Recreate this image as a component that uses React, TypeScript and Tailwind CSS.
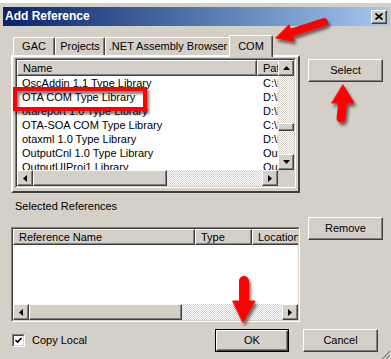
import React from 'react';

const face = 'bg-[#d4d0c8]';
const dither =
  'bg-[image:repeating-conic-gradient(#ffffff_0_25%,#d4d0c8_0_50%)] bg-size-[2px_2px]';
const raised =
  'border border-t-white border-l-white border-r-[#404040] border-b-[#404040] shadow-[inset_-1px_-1px_0_#808080]';

const Tri = ({ dir }: { dir: 'up' | 'down' | 'left' | 'right' }) => {
  const pts = {
    up: '3.5,0 7,4 0,4',
    down: '0,0 7,0 3.5,4',
    left: '4,0 4,7 0,3.5',
    right: '0,0 0,7 4,3.5',
  }[dir];
  const vertical = dir === 'up' || dir === 'down';
  return (
    <svg width={vertical ? 7 : 4} height={vertical ? 4 : 7} viewBox={vertical ? '0 0 7 4' : '0 0 4 7'}>
      <polygon points={pts} fill="#000" />
    </svg>
  );
};

const ArrowBtn = ({ dir }: { dir: 'up' | 'down' | 'left' | 'right' }) => (
  <div className={`w-[16px] h-[16px] shrink-0 flex items-center justify-center ${face} ${raised}`}>
    <Tri dir={dir} />
  </div>
);

const HScroll = ({ thumb }: { thumb: number }) => (
  <div className="flex h-[16px] shrink-0">
    <ArrowBtn dir="left" />
    <div className={`flex-1 ${dither}`}>
      <div className={`h-[16px] ${face} ${raised}`} style={{ width: thumb }} />
    </div>
    <ArrowBtn dir="right" />
  </div>
);

const Sunken = ({ className, children }: { className: string; children: React.ReactNode }) => (
  <div className={`border border-t-[#808080] border-l-[#808080] border-r-white border-b-white ${className}`}>
    <div className="h-full border border-t-[#404040] border-l-[#404040] border-r-[#d4d0c8] border-b-[#d4d0c8] bg-white overflow-hidden">
      {children}
    </div>
  </div>
);

const HeadCell = ({ w, children }: { w: number; children: React.ReactNode }) => (
  <div
    className={`h-[16px] shrink-0 flex items-center pl-[5px] whitespace-nowrap overflow-hidden ${face} ${raised}`}
    style={{ width: w }}
  >
    {children}
  </div>
);

const Button = ({ children, def = false, w = 75 }: { children: React.ReactNode; def?: boolean; w?: number }) => (
  <div className={`h-[23px] shrink-0 ${def ? 'border border-black' : ''}`} style={{ width: w }}>
    <div className={`h-full flex items-center justify-center ${face} ${raised}`}>{children}</div>
  </div>
);

const libs = [
  ['OscAddin 1.1 Type Library', 'C:\\Program Files\\Common Files'],
  ['OTA COM Type Library', 'D:\\Program Files\\HP'],
  ['otareport 1.0 Type Library', 'D:\\Program Files\\HP'],
  ['OTA-SOA COM Type Library', 'C:\\Program Files\\Common Files'],
  ['otaxml 1.0 Type Library', 'D:\\Program Files\\HP'],
  ['OutputCnl 1.0 Type Library', 'OutputCnl.dll'],
  ['OutputUIProj1 Library', 'OutputUIProj1.dll'],
];

const tabs = [
  { label: 'GAC', w: 42 },
  { label: 'Projects', w: 50 },
  { label: '.NET Assembly Browser', w: 126 },
];

export default function App() {
  return (
    <div className={`relative w-[391px] h-[359px] overflow-hidden ${face} text-[11px] leading-[13px] text-black font-['Liberation_Sans',Arial,sans-serif]`}>
      <div className="h-[3px] bg-white" />
      <div className="h-[4px]" />

      {/* Title bar */}
      <div className="ml-[3px] w-[387px] h-[19px] flex items-center justify-between bg-linear-to-r from-[#0a246a] to-[#a6caf0] pl-[2px] pr-[3px]">
        <span className="text-white font-bold text-[12px]">Add Reference</span>
        <div className={`w-[16px] h-[14px] flex items-center justify-center ${face} ${raised}`}>
          <svg width="8" height="7" viewBox="0 0 8 7">
            <path d="M0.5 0.5 L7.5 6.5 M7.5 0.5 L0.5 6.5" stroke="#000" strokeWidth="1.8" />
          </svg>
        </div>
      </div>

      {/* Tabs + Select */}
      <div className="flex pl-[11px] pt-[9px]">
        <div className="w-[289px]">
          <div className="flex items-end h-[20px] pl-[2px]">
            {tabs.map((t) => (
              <div
                key={t.label}
                className="h-[18px] shrink-0 flex items-center justify-center border-t border-l border-r border-t-white border-l-white border-r-[#404040] rounded-t-[2px] shadow-[inset_-1px_0_0_#808080] whitespace-nowrap"
                style={{ width: t.w }}
              >
                {t.label}
              </div>
            ))}
            <div className={`relative z-10 -ml-[2px] -mb-[2px] w-[44px] h-[22px] shrink-0 flex items-start justify-center pt-[4px] border-t border-l border-r border-t-white border-l-white border-r-[#404040] rounded-t-[2px] shadow-[inset_-1px_0_0_#808080] ${face}`}>
              COM
            </div>
          </div>
          <div className="h-[138px] border-2 border-t-white border-l-white border-r-[#404040] border-b-[#404040] pt-[1px] pl-[2px]">
            <Sunken className="w-[281px] h-[130px]">
              <div className="flex h-full">
                <div className="flex flex-col w-[261px]">
                  <div className="h-[110px] overflow-hidden">
                    <div className="flex">
                      <HeadCell w={240}>Name</HeadCell>
                      <HeadCell w={60}>Path</HeadCell>
                    </div>
                    {libs.map(([name, path]) => (
                      <div key={name} className="flex h-[14px] items-center whitespace-nowrap">
                        <div className="w-[240px] shrink-0 pl-[5px]">{name}</div>
                        <div className="shrink-0 pl-[6px]">{path}</div>
                      </div>
                    ))}
                  </div>
                  <HScroll thumb={134} />
                </div>
                <div className="flex flex-col w-[16px]">
                  <ArrowBtn dir="up" />
                  <div className={`flex-1 ${dither}`}>
                    <div className={`mt-[47px] h-[8px] ${face} ${raised}`} />
                  </div>
                  <ArrowBtn dir="down" />
                  <div className={`h-[16px] ${face}`} />
                </div>
              </div>
            </Sunken>
          </div>
        </div>
        <div className="ml-[8px] pt-[24px]">
          <Button>Select</Button>
        </div>
      </div>

      {/* Selected references + Remove */}
      <div className="flex pl-[11px]">
        <div className="w-[289px]">
          <div className="pl-[4px] pt-[7px]">Selected References</div>
          <Sunken className="mt-[14px] w-[289px] h-[95px]">
            <div className="flex flex-col h-full">
              <div className="flex overflow-hidden">
                <HeadCell w={182}>Reference Name</HeadCell>
                <HeadCell w={57}>Type</HeadCell>
                <HeadCell w={70}>Location</HeadCell>
              </div>
              <div className="flex-1" />
              <HScroll thumb={153} />
            </div>
          </Sunken>
        </div>
        <div className="ml-[8px] pt-[24px]">
          <Button>Remove</Button>
        </div>
      </div>

      {/* Bottom row */}
      <div className="flex items-center h-[23px] mt-[7px] pl-[12px] pr-[13px]">
        <div className="flex items-center flex-1">
          <div className="w-[13px] h-[13px] border border-t-[#808080] border-l-[#808080] border-r-white border-b-white">
            <div className="h-full border border-t-[#404040] border-l-[#404040] border-r-[#d4d0c8] border-b-[#d4d0c8] bg-white flex items-center justify-center">
              <svg width="7" height="7" viewBox="0 0 7 7">
                <path d="M0.5 3 L2.5 5 L6.5 1" stroke="#000" strokeWidth="1.6" fill="none" />
              </svg>
            </div>
          </div>
          <span className="ml-[7px]">Copy Local</span>
        </div>
        <Button def w={74}>OK</Button>
        <div className="w-[14px]" />
        <Button>Cancel</Button>
      </div>

      {/* Resize grip */}
      <svg className="absolute right-[1px] bottom-[0px]" width="13" height="13" viewBox="0 0 13 13">
        {[0, 4, 8].map((o) => (
          <g key={o}>
            <line x1={12 - o} y1={13} x2={13} y2={12 - o} stroke="#ffffff" strokeWidth="1" />
            <line x1={13 - o} y1={13} x2={13} y2={13 - o} stroke="#808080" strokeWidth="1.4" />
          </g>
        ))}
      </svg>

      {/* Red annotations */}
      <svg className="absolute inset-0 pointer-events-none" width="391" height="359">
        <defs>
          <filter id="sh" x="-50%" y="-50%" width="200%" height="200%">
            <feDropShadow dx="2" dy="3" stdDeviation="1.8" floodColor="#000" floodOpacity="0.55" />
          </filter>
        </defs>
        <g filter="url(#sh)">
          <rect x="15" y="89" width="130" height="20" fill="none" stroke="#ff0000" strokeWidth="4" />
        </g>
        <g filter="url(#sh)" fill="#ff0000" stroke="#ff0000" strokeLinecap="round">
          <line x1="290" y1="33" x2="324" y2="22" strokeWidth="8" />
          <polygon points="276,38 294,41 289,25" strokeWidth="1" strokeLinejoin="round" />
          <line x1="343" y1="101" x2="341" y2="118" strokeWidth="9" />
          <polygon points="343,85 354,103 332,103" strokeWidth="1" strokeLinejoin="round" />
          <line x1="244" y1="281" x2="244" y2="303" strokeWidth="10" />
          <polygon points="233,301 255,301 243,322" strokeWidth="1" strokeLinejoin="round" />
        </g>
      </svg>
    </div>
  );
}
